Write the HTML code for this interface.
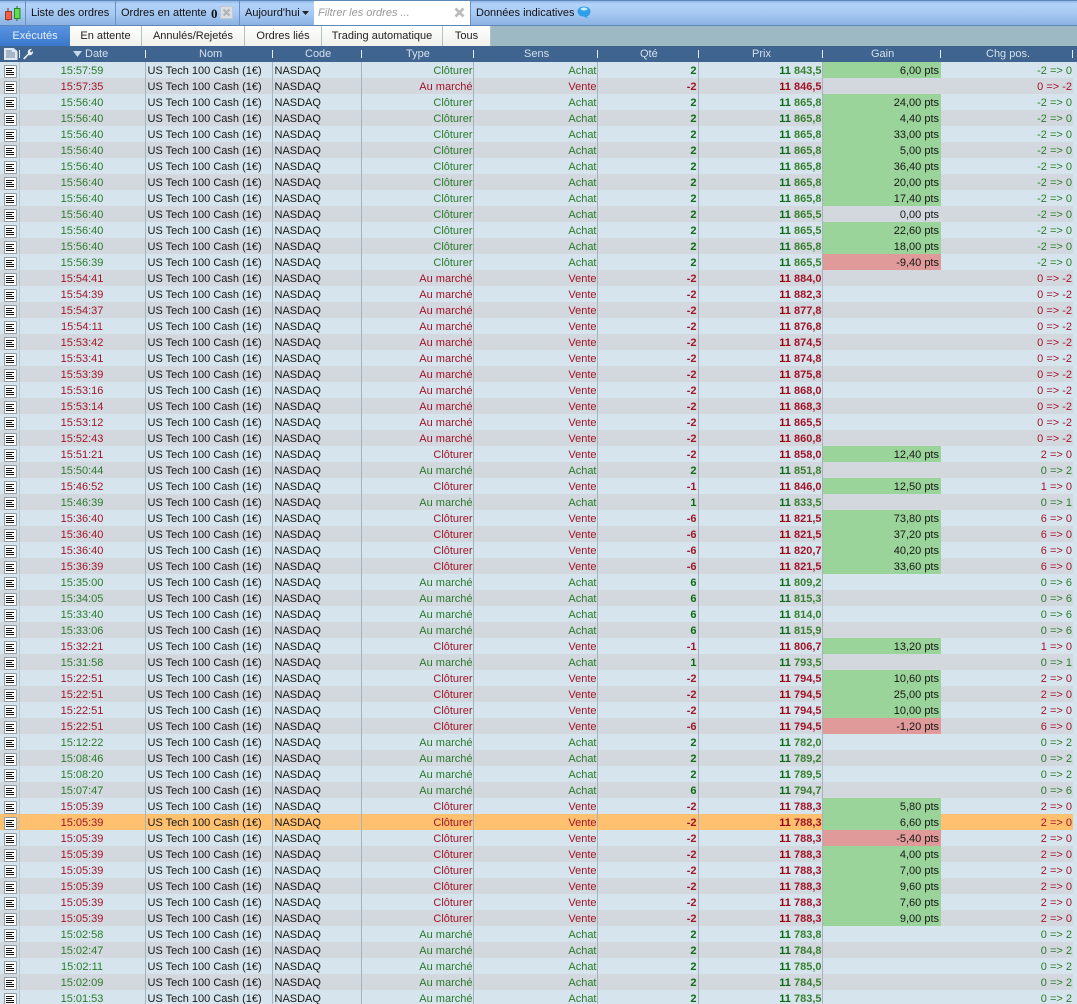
<!DOCTYPE html>
<html lang="fr"><head><meta charset="utf-8"><title>Liste des ordres</title>
<style>
html,body{margin:0;padding:0;width:1077px;height:1004px;overflow:hidden;background:#d6e5ed}
body{position:relative;font-family:"Liberation Sans",Arial,sans-serif;font-size:11px;color:#111}
div,span,svg{position:absolute}
#bar{left:0;top:0;width:1077px;height:26px;background:linear-gradient(#8fb6e6 0,#b3d3f9 3px,#a5c8f3 13px,#8ab0e0 25px);border-top:1px solid #5f88ba;border-bottom:1px solid #5f88ba;box-sizing:border-box}
.sep{top:0;width:1px;height:25px;background:#6a90c0}
.bt{top:6px;color:#111;white-space:nowrap;line-height:13px}
#filter{left:314px;top:0;width:156px;height:24px;background:#fff}
#tabs{left:0;top:26px;width:1077px;height:20px;background:#9cb9c4}
.tab{top:0;height:20px;background:linear-gradient(#fff,#f0f0ec);border-right:1px solid #b5c0c5;box-sizing:border-box;text-align:center;line-height:20px;color:#222}
#hd{left:0;top:46px;width:1077px;height:16px;background:#3f648f}
.h{top:0;height:16px;line-height:16px;color:#d4e0ec;text-align:center}
.tk{top:4px;width:1px;height:8px;background:#e6edf4}
table{position:absolute;left:0;top:62px;border-collapse:collapse;table-layout:fixed;width:1073px}
td{height:16px;padding:2px 1px 0 0;line-height:14px;box-sizing:border-box;white-space:nowrap;overflow:hidden;text-align:right;border-right:1px solid #a5b4bc}
tr{background:#d6e5ed}
tr:nth-child(even){background:#d3d8df}
tr.hl{background:#ffc06f}
td:nth-child(1){border-right:1px solid #b5c5cc;padding:0}
td:nth-child(2){text-align:center;padding-left:1px}
td:nth-child(3),td:nth-child(4){text-align:left;padding-left:2px;color:#161616}
td:nth-child(5),td:nth-child(6){padding-right:0}
td:nth-child(7){font-weight:bold;padding-right:1px}
td:nth-child(8){padding-right:0}
td:nth-child(9){color:#222;border-right:0;padding-right:2px}
td:nth-child(10){border-right:0}
tr.g td{color:#2a7a2a}
tr.r td{color:#a01428}
tr.g td:nth-child(3),tr.g td:nth-child(4),tr.r td:nth-child(3),tr.r td:nth-child(4),tr.g td:nth-child(9),tr.r td:nth-child(9){color:#161616}
tr.g td:nth-child(7){color:#0c6a14}
tr.g td:nth-child(8){color:#3a8030}
td b{color:#0a6a14}
tr.r td b{color:#96000f}
tr.g td:nth-child(8),tr.r td:nth-child(8){font-weight:bold}
td.p{background:#9bd49a}
td.n{background:#e09a9a}
td i{display:block;width:13px;height:13px;margin:2px 0 0 4px;box-sizing:border-box;border:1px solid #8f9aa2;border-radius:1px;background-color:#fff;background-image:linear-gradient(#111,#111),linear-gradient(#111,#111),linear-gradient(#111,#111),linear-gradient(#111,#111);background-repeat:no-repeat;background-size:8px 1px,6px 1px,8px 1px,8px 1px;background-position:1px 2px,1px 4px,1px 6px,1px 8px}
</style></head><body>
<div id="bar">
<svg style="left:1px;top:4px" width="20" height="18" viewBox="0 0 20 18"><path d="M7 3v13" stroke="#8a2a20" stroke-width="1"/><rect x="4.500" y="6.500" width="6" height="8" fill="#f0604a" stroke="#a03a2a"/><path d="M16 1v15" stroke="#2a6a20"/><rect x="13.500" y="3.500" width="5.500" height="10" fill="#5fdc50" stroke="#2a8a20"/></svg>
<div class="sep" style="left:25px"></div>
<span class="bt" style="left:31px">Liste des ordres</span>
<div class="sep" style="left:115px"></div>
<span class="bt" style="left:121px">Ordres en attente</span>
<span class="bt" style="left:211px;font-family:'Liberation Serif',serif;font-weight:bold;font-size:13px">0</span>
<svg style="left:220px;top:5px" width="13" height="13" viewBox="0 0 13 13"><rect x=".5" y=".5" width="12" height="12" fill="#d8dee2" stroke="#c0c8d0"/><path d="M3.500 3.500l6 6M9.500 3.500l-6 6" stroke="#b0b4b4" stroke-width="2.200"/></svg>
<div class="sep" style="left:239px"></div>
<span class="bt" style="left:245px">Aujourd'hui</span>
<svg style="left:302px;top:10px" width="7" height="4" viewBox="0 0 7 4"><path d="M0 0h7L3.500 4z" fill="#222"/></svg>
<div id="filter"></div>
<span class="bt" style="left:318px;color:#999;font-style:italic">Filtrer les ordres ...</span>
<svg style="left:454px;top:6px" width="11" height="11" viewBox="0 0 11 11"><path d="M1.500 1.500l8 8M9.500 1.500l-8 8" stroke="#bbb" stroke-width="2.800"/></svg>
<div class="sep" style="left:470px"></div>
<span class="bt" style="left:476px">Données indicatives</span>
<svg style="left:577px;top:5px" width="14" height="13" viewBox="0 0 14 13"><path d="M7 .5c3.500 0 6.500 2 6.500 5S11 10.500 9.500 10.300L11.500 12.500 6.500 10.500C3 10.500 .5 8.500 .5 5.500S3.500 .5 7 .5z" fill="#2f9fe8"/><ellipse cx="7" cy="3" rx="3.500" ry="1.500" fill="#c8ecfc"/></svg>
</div>
<div id="tabs">
<div class="tab" style="left:0;width:70px;background:linear-gradient(#5a94e0,#3a78cc);color:#e8f2ff;border:0">Exécutés</div>
<div class="tab" style="left:70px;width:72px">En attente</div>
<div class="tab" style="left:142px;width:103px">Annulés/Rejetés</div>
<div class="tab" style="left:245px;width:77px">Ordres liés</div>
<div class="tab" style="left:322px;width:121px">Trading automatique</div>
<div class="tab" style="left:443px;width:48px">Tous</div>
</div>
<div id="hd">
<svg style="left:4px;top:2px" width="14" height="12" viewBox="0 0 14 12"><path d="M.5.500h9l3.500 3v8H.500z" fill="#dfe8f0" stroke="#dfe8f0"/><path d="M2 3h6M2 5h9M2 7h9M2 9h9" stroke="#6a84a0"/></svg>
<div class="tk" style="left:19px"></div>
<svg style="left:22px;top:2px" width="12" height="12" viewBox="0 0 12 12"><path d="M1 10.500L6 5.500C5 3 7 .5 10 1L8 3l1 1.500L11 3c.5 3-2 5-4.500 4L2.500 11.500z" fill="#e8eef4"/></svg>
<svg style="left:73px;top:5px" width="9" height="6" viewBox="0 0 9 6"><path d="M0 0h9L4.500 6z" fill="#c8d8e8"/></svg>
<span class="h" style="left:85px">Date</span><div class="tk" style="left:145px"></div>
<span class="h" style="left:199px">Nom</span><div class="tk" style="left:272px"></div>
<span class="h" style="left:305px">Code</span><div class="tk" style="left:361px"></div>
<span class="h" style="left:406px">Type</span><div class="tk" style="left:473px"></div>
<span class="h" style="left:524px">Sens</span><div class="tk" style="left:597px"></div>
<span class="h" style="left:640px">Qté</span><div class="tk" style="left:698px"></div>
<span class="h" style="left:752px">Prix</span><div class="tk" style="left:822px"></div>
<span class="h" style="left:871px">Gain</span><div class="tk" style="left:940px"></div>
<span class="h" style="left:986px">Chg pos.</span><div class="tk" style="left:1072px"></div>
</div>
<table>
<colgroup><col style="width:19px"><col style="width:126px"><col style="width:127px"><col style="width:89px"><col style="width:112px"><col style="width:124px"><col style="width:101px"><col style="width:124px"><col style="width:119px"><col style="width:132px"></colgroup>
<tbody>
<tr class="g"><td><i></i></td><td>15:57:59</td><td>US Tech 100 Cash (1€)</td><td>NASDAQ</td><td>Clôturer</td><td>Achat</td><td>2</td><td><b>11</b> 843,5</td><td class="p">6,00 pts</td><td>-2 =&gt; 0</td></tr>
<tr class="r"><td><i></i></td><td>15:57:35</td><td>US Tech 100 Cash (1€)</td><td>NASDAQ</td><td>Au marché</td><td>Vente</td><td>-2</td><td><b>11</b> 846,5</td><td></td><td>0 =&gt; -2</td></tr>
<tr class="g"><td><i></i></td><td>15:56:40</td><td>US Tech 100 Cash (1€)</td><td>NASDAQ</td><td>Clôturer</td><td>Achat</td><td>2</td><td><b>11</b> 865,8</td><td class="p">24,00 pts</td><td>-2 =&gt; 0</td></tr>
<tr class="g"><td><i></i></td><td>15:56:40</td><td>US Tech 100 Cash (1€)</td><td>NASDAQ</td><td>Clôturer</td><td>Achat</td><td>2</td><td><b>11</b> 865,8</td><td class="p">4,40 pts</td><td>-2 =&gt; 0</td></tr>
<tr class="g"><td><i></i></td><td>15:56:40</td><td>US Tech 100 Cash (1€)</td><td>NASDAQ</td><td>Clôturer</td><td>Achat</td><td>2</td><td><b>11</b> 865,8</td><td class="p">33,00 pts</td><td>-2 =&gt; 0</td></tr>
<tr class="g"><td><i></i></td><td>15:56:40</td><td>US Tech 100 Cash (1€)</td><td>NASDAQ</td><td>Clôturer</td><td>Achat</td><td>2</td><td><b>11</b> 865,8</td><td class="p">5,00 pts</td><td>-2 =&gt; 0</td></tr>
<tr class="g"><td><i></i></td><td>15:56:40</td><td>US Tech 100 Cash (1€)</td><td>NASDAQ</td><td>Clôturer</td><td>Achat</td><td>2</td><td><b>11</b> 865,8</td><td class="p">36,40 pts</td><td>-2 =&gt; 0</td></tr>
<tr class="g"><td><i></i></td><td>15:56:40</td><td>US Tech 100 Cash (1€)</td><td>NASDAQ</td><td>Clôturer</td><td>Achat</td><td>2</td><td><b>11</b> 865,8</td><td class="p">20,00 pts</td><td>-2 =&gt; 0</td></tr>
<tr class="g"><td><i></i></td><td>15:56:40</td><td>US Tech 100 Cash (1€)</td><td>NASDAQ</td><td>Clôturer</td><td>Achat</td><td>2</td><td><b>11</b> 865,8</td><td class="p">17,40 pts</td><td>-2 =&gt; 0</td></tr>
<tr class="g"><td><i></i></td><td>15:56:40</td><td>US Tech 100 Cash (1€)</td><td>NASDAQ</td><td>Clôturer</td><td>Achat</td><td>2</td><td><b>11</b> 865,5</td><td>0,00 pts</td><td>-2 =&gt; 0</td></tr>
<tr class="g"><td><i></i></td><td>15:56:40</td><td>US Tech 100 Cash (1€)</td><td>NASDAQ</td><td>Clôturer</td><td>Achat</td><td>2</td><td><b>11</b> 865,5</td><td class="p">22,60 pts</td><td>-2 =&gt; 0</td></tr>
<tr class="g"><td><i></i></td><td>15:56:40</td><td>US Tech 100 Cash (1€)</td><td>NASDAQ</td><td>Clôturer</td><td>Achat</td><td>2</td><td><b>11</b> 865,8</td><td class="p">18,00 pts</td><td>-2 =&gt; 0</td></tr>
<tr class="g"><td><i></i></td><td>15:56:39</td><td>US Tech 100 Cash (1€)</td><td>NASDAQ</td><td>Clôturer</td><td>Achat</td><td>2</td><td><b>11</b> 865,5</td><td class="n">-9,40 pts</td><td>-2 =&gt; 0</td></tr>
<tr class="r"><td><i></i></td><td>15:54:41</td><td>US Tech 100 Cash (1€)</td><td>NASDAQ</td><td>Au marché</td><td>Vente</td><td>-2</td><td><b>11</b> 884,0</td><td></td><td>0 =&gt; -2</td></tr>
<tr class="r"><td><i></i></td><td>15:54:39</td><td>US Tech 100 Cash (1€)</td><td>NASDAQ</td><td>Au marché</td><td>Vente</td><td>-2</td><td><b>11</b> 882,3</td><td></td><td>0 =&gt; -2</td></tr>
<tr class="r"><td><i></i></td><td>15:54:37</td><td>US Tech 100 Cash (1€)</td><td>NASDAQ</td><td>Au marché</td><td>Vente</td><td>-2</td><td><b>11</b> 877,8</td><td></td><td>0 =&gt; -2</td></tr>
<tr class="r"><td><i></i></td><td>15:54:11</td><td>US Tech 100 Cash (1€)</td><td>NASDAQ</td><td>Au marché</td><td>Vente</td><td>-2</td><td><b>11</b> 876,8</td><td></td><td>0 =&gt; -2</td></tr>
<tr class="r"><td><i></i></td><td>15:53:42</td><td>US Tech 100 Cash (1€)</td><td>NASDAQ</td><td>Au marché</td><td>Vente</td><td>-2</td><td><b>11</b> 874,5</td><td></td><td>0 =&gt; -2</td></tr>
<tr class="r"><td><i></i></td><td>15:53:41</td><td>US Tech 100 Cash (1€)</td><td>NASDAQ</td><td>Au marché</td><td>Vente</td><td>-2</td><td><b>11</b> 874,8</td><td></td><td>0 =&gt; -2</td></tr>
<tr class="r"><td><i></i></td><td>15:53:39</td><td>US Tech 100 Cash (1€)</td><td>NASDAQ</td><td>Au marché</td><td>Vente</td><td>-2</td><td><b>11</b> 875,8</td><td></td><td>0 =&gt; -2</td></tr>
<tr class="r"><td><i></i></td><td>15:53:16</td><td>US Tech 100 Cash (1€)</td><td>NASDAQ</td><td>Au marché</td><td>Vente</td><td>-2</td><td><b>11</b> 868,0</td><td></td><td>0 =&gt; -2</td></tr>
<tr class="r"><td><i></i></td><td>15:53:14</td><td>US Tech 100 Cash (1€)</td><td>NASDAQ</td><td>Au marché</td><td>Vente</td><td>-2</td><td><b>11</b> 868,3</td><td></td><td>0 =&gt; -2</td></tr>
<tr class="r"><td><i></i></td><td>15:53:12</td><td>US Tech 100 Cash (1€)</td><td>NASDAQ</td><td>Au marché</td><td>Vente</td><td>-2</td><td><b>11</b> 865,5</td><td></td><td>0 =&gt; -2</td></tr>
<tr class="r"><td><i></i></td><td>15:52:43</td><td>US Tech 100 Cash (1€)</td><td>NASDAQ</td><td>Au marché</td><td>Vente</td><td>-2</td><td><b>11</b> 860,8</td><td></td><td>0 =&gt; -2</td></tr>
<tr class="r"><td><i></i></td><td>15:51:21</td><td>US Tech 100 Cash (1€)</td><td>NASDAQ</td><td>Clôturer</td><td>Vente</td><td>-2</td><td><b>11</b> 858,0</td><td class="p">12,40 pts</td><td>2 =&gt; 0</td></tr>
<tr class="g"><td><i></i></td><td>15:50:44</td><td>US Tech 100 Cash (1€)</td><td>NASDAQ</td><td>Au marché</td><td>Achat</td><td>2</td><td><b>11</b> 851,8</td><td></td><td>0 =&gt; 2</td></tr>
<tr class="r"><td><i></i></td><td>15:46:52</td><td>US Tech 100 Cash (1€)</td><td>NASDAQ</td><td>Clôturer</td><td>Vente</td><td>-1</td><td><b>11</b> 846,0</td><td class="p">12,50 pts</td><td>1 =&gt; 0</td></tr>
<tr class="g"><td><i></i></td><td>15:46:39</td><td>US Tech 100 Cash (1€)</td><td>NASDAQ</td><td>Au marché</td><td>Achat</td><td>1</td><td><b>11</b> 833,5</td><td></td><td>0 =&gt; 1</td></tr>
<tr class="r"><td><i></i></td><td>15:36:40</td><td>US Tech 100 Cash (1€)</td><td>NASDAQ</td><td>Clôturer</td><td>Vente</td><td>-6</td><td><b>11</b> 821,5</td><td class="p">73,80 pts</td><td>6 =&gt; 0</td></tr>
<tr class="r"><td><i></i></td><td>15:36:40</td><td>US Tech 100 Cash (1€)</td><td>NASDAQ</td><td>Clôturer</td><td>Vente</td><td>-6</td><td><b>11</b> 821,5</td><td class="p">37,20 pts</td><td>6 =&gt; 0</td></tr>
<tr class="r"><td><i></i></td><td>15:36:40</td><td>US Tech 100 Cash (1€)</td><td>NASDAQ</td><td>Clôturer</td><td>Vente</td><td>-6</td><td><b>11</b> 820,7</td><td class="p">40,20 pts</td><td>6 =&gt; 0</td></tr>
<tr class="r"><td><i></i></td><td>15:36:39</td><td>US Tech 100 Cash (1€)</td><td>NASDAQ</td><td>Clôturer</td><td>Vente</td><td>-6</td><td><b>11</b> 821,5</td><td class="p">33,60 pts</td><td>6 =&gt; 0</td></tr>
<tr class="g"><td><i></i></td><td>15:35:00</td><td>US Tech 100 Cash (1€)</td><td>NASDAQ</td><td>Au marché</td><td>Achat</td><td>6</td><td><b>11</b> 809,2</td><td></td><td>0 =&gt; 6</td></tr>
<tr class="g"><td><i></i></td><td>15:34:05</td><td>US Tech 100 Cash (1€)</td><td>NASDAQ</td><td>Au marché</td><td>Achat</td><td>6</td><td><b>11</b> 815,3</td><td></td><td>0 =&gt; 6</td></tr>
<tr class="g"><td><i></i></td><td>15:33:40</td><td>US Tech 100 Cash (1€)</td><td>NASDAQ</td><td>Au marché</td><td>Achat</td><td>6</td><td><b>11</b> 814,0</td><td></td><td>0 =&gt; 6</td></tr>
<tr class="g"><td><i></i></td><td>15:33:06</td><td>US Tech 100 Cash (1€)</td><td>NASDAQ</td><td>Au marché</td><td>Achat</td><td>6</td><td><b>11</b> 815,9</td><td></td><td>0 =&gt; 6</td></tr>
<tr class="r"><td><i></i></td><td>15:32:21</td><td>US Tech 100 Cash (1€)</td><td>NASDAQ</td><td>Clôturer</td><td>Vente</td><td>-1</td><td><b>11</b> 806,7</td><td class="p">13,20 pts</td><td>1 =&gt; 0</td></tr>
<tr class="g"><td><i></i></td><td>15:31:58</td><td>US Tech 100 Cash (1€)</td><td>NASDAQ</td><td>Au marché</td><td>Achat</td><td>1</td><td><b>11</b> 793,5</td><td></td><td>0 =&gt; 1</td></tr>
<tr class="r"><td><i></i></td><td>15:22:51</td><td>US Tech 100 Cash (1€)</td><td>NASDAQ</td><td>Clôturer</td><td>Vente</td><td>-2</td><td><b>11</b> 794,5</td><td class="p">10,60 pts</td><td>2 =&gt; 0</td></tr>
<tr class="r"><td><i></i></td><td>15:22:51</td><td>US Tech 100 Cash (1€)</td><td>NASDAQ</td><td>Clôturer</td><td>Vente</td><td>-2</td><td><b>11</b> 794,5</td><td class="p">25,00 pts</td><td>2 =&gt; 0</td></tr>
<tr class="r"><td><i></i></td><td>15:22:51</td><td>US Tech 100 Cash (1€)</td><td>NASDAQ</td><td>Clôturer</td><td>Vente</td><td>-2</td><td><b>11</b> 794,5</td><td class="p">10,00 pts</td><td>2 =&gt; 0</td></tr>
<tr class="r"><td><i></i></td><td>15:22:51</td><td>US Tech 100 Cash (1€)</td><td>NASDAQ</td><td>Clôturer</td><td>Vente</td><td>-6</td><td><b>11</b> 794,5</td><td class="n">-1,20 pts</td><td>6 =&gt; 0</td></tr>
<tr class="g"><td><i></i></td><td>15:12:22</td><td>US Tech 100 Cash (1€)</td><td>NASDAQ</td><td>Au marché</td><td>Achat</td><td>2</td><td><b>11</b> 782,0</td><td></td><td>0 =&gt; 2</td></tr>
<tr class="g"><td><i></i></td><td>15:08:46</td><td>US Tech 100 Cash (1€)</td><td>NASDAQ</td><td>Au marché</td><td>Achat</td><td>2</td><td><b>11</b> 789,2</td><td></td><td>0 =&gt; 2</td></tr>
<tr class="g"><td><i></i></td><td>15:08:20</td><td>US Tech 100 Cash (1€)</td><td>NASDAQ</td><td>Au marché</td><td>Achat</td><td>2</td><td><b>11</b> 789,5</td><td></td><td>0 =&gt; 2</td></tr>
<tr class="g"><td><i></i></td><td>15:07:47</td><td>US Tech 100 Cash (1€)</td><td>NASDAQ</td><td>Au marché</td><td>Achat</td><td>6</td><td><b>11</b> 794,7</td><td></td><td>0 =&gt; 6</td></tr>
<tr class="r"><td><i></i></td><td>15:05:39</td><td>US Tech 100 Cash (1€)</td><td>NASDAQ</td><td>Clôturer</td><td>Vente</td><td>-2</td><td><b>11</b> 788,3</td><td class="p">5,80 pts</td><td>2 =&gt; 0</td></tr>
<tr class="r hl"><td><i></i></td><td>15:05:39</td><td>US Tech 100 Cash (1€)</td><td>NASDAQ</td><td>Clôturer</td><td>Vente</td><td>-2</td><td><b>11</b> 788,3</td><td class="p">6,60 pts</td><td>2 =&gt; 0</td></tr>
<tr class="r"><td><i></i></td><td>15:05:39</td><td>US Tech 100 Cash (1€)</td><td>NASDAQ</td><td>Clôturer</td><td>Vente</td><td>-2</td><td><b>11</b> 788,3</td><td class="n">-5,40 pts</td><td>2 =&gt; 0</td></tr>
<tr class="r"><td><i></i></td><td>15:05:39</td><td>US Tech 100 Cash (1€)</td><td>NASDAQ</td><td>Clôturer</td><td>Vente</td><td>-2</td><td><b>11</b> 788,3</td><td class="p">4,00 pts</td><td>2 =&gt; 0</td></tr>
<tr class="r"><td><i></i></td><td>15:05:39</td><td>US Tech 100 Cash (1€)</td><td>NASDAQ</td><td>Clôturer</td><td>Vente</td><td>-2</td><td><b>11</b> 788,3</td><td class="p">7,00 pts</td><td>2 =&gt; 0</td></tr>
<tr class="r"><td><i></i></td><td>15:05:39</td><td>US Tech 100 Cash (1€)</td><td>NASDAQ</td><td>Clôturer</td><td>Vente</td><td>-2</td><td><b>11</b> 788,3</td><td class="p">9,60 pts</td><td>2 =&gt; 0</td></tr>
<tr class="r"><td><i></i></td><td>15:05:39</td><td>US Tech 100 Cash (1€)</td><td>NASDAQ</td><td>Clôturer</td><td>Vente</td><td>-2</td><td><b>11</b> 788,3</td><td class="p">7,60 pts</td><td>2 =&gt; 0</td></tr>
<tr class="r"><td><i></i></td><td>15:05:39</td><td>US Tech 100 Cash (1€)</td><td>NASDAQ</td><td>Clôturer</td><td>Vente</td><td>-2</td><td><b>11</b> 788,3</td><td class="p">9,00 pts</td><td>2 =&gt; 0</td></tr>
<tr class="g"><td><i></i></td><td>15:02:58</td><td>US Tech 100 Cash (1€)</td><td>NASDAQ</td><td>Au marché</td><td>Achat</td><td>2</td><td><b>11</b> 783,8</td><td></td><td>0 =&gt; 2</td></tr>
<tr class="g"><td><i></i></td><td>15:02:47</td><td>US Tech 100 Cash (1€)</td><td>NASDAQ</td><td>Au marché</td><td>Achat</td><td>2</td><td><b>11</b> 784,8</td><td></td><td>0 =&gt; 2</td></tr>
<tr class="g"><td><i></i></td><td>15:02:11</td><td>US Tech 100 Cash (1€)</td><td>NASDAQ</td><td>Au marché</td><td>Achat</td><td>2</td><td><b>11</b> 785,0</td><td></td><td>0 =&gt; 2</td></tr>
<tr class="g"><td><i></i></td><td>15:02:09</td><td>US Tech 100 Cash (1€)</td><td>NASDAQ</td><td>Au marché</td><td>Achat</td><td>2</td><td><b>11</b> 784,5</td><td></td><td>0 =&gt; 2</td></tr>
<tr class="g"><td><i></i></td><td>15:01:53</td><td>US Tech 100 Cash (1€)</td><td>NASDAQ</td><td>Au marché</td><td>Achat</td><td>2</td><td><b>11</b> 783,5</td><td></td><td>0 =&gt; 2</td></tr>
</tbody></table>
</body></html>
